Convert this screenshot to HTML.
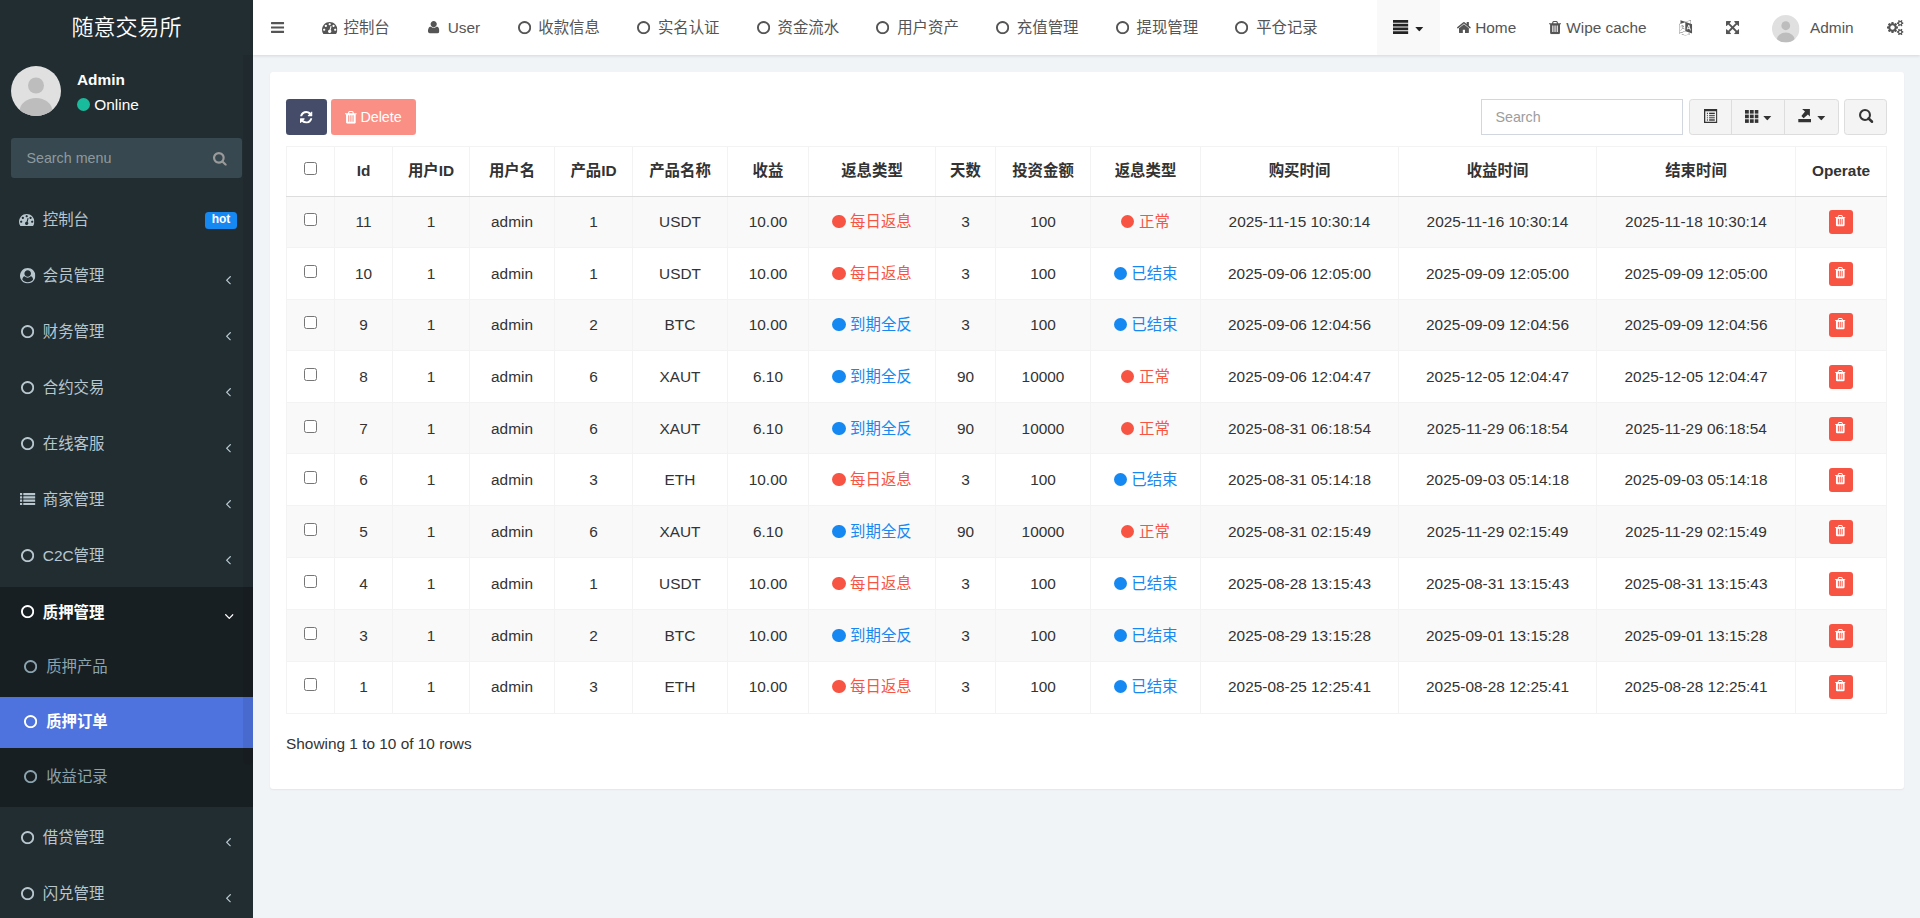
<!DOCTYPE html>
<html lang="zh-CN"><head><meta charset="utf-8"><title>随意交易所</title>
<style>
*{box-sizing:border-box}
html,body{margin:0;padding:0}
body{width:1920px;height:918px;overflow:hidden;position:relative;background:#f1f4f6;font-family:"Liberation Sans","Noto Sans CJK SC",sans-serif;font-size:15.4px;color:#333;line-height:1.42857}
svg{fill:currentColor;overflow:visible}
.ic{position:absolute;display:block}
.abs{position:absolute;white-space:nowrap}
#side{position:absolute;left:0;top:0;width:253px;height:918px;background:#222d32;overflow:hidden}
#logo{position:absolute;left:0;top:0;width:253px;height:55px;line-height:55px;text-align:center;color:#fff;font-size:22px;font-weight:350}
#sbar{position:absolute;left:243px;top:55px;width:10px;height:710px;background:rgba(0,0,0,.075);border-radius:0 0 5px 5px;z-index:5}
.mi{position:absolute;left:0;width:253px;height:48px;line-height:48px;color:#b8c7ce;font-size:15.4px;white-space:nowrap}
.mi .t{position:absolute;left:42.8px;top:1.4px}
.mi.sub{height:51px;line-height:51px;color:#8aa4af}
.mi.sub .t{left:46.2px;top:0.4px}
.mi.on{color:#fff;font-weight:bold}
#nav{position:absolute;left:253px;top:0;width:1667px;height:55px;background:#fff;box-shadow:0 1px 3px rgba(0,20,40,.13)}
#tabs{position:absolute;left:49.9px;top:0;height:55px;white-space:nowrap;font-size:0}
#tabs a{display:inline-block;height:55px;line-height:55px;padding:0 16.5px;margin-right:0.98px;font-size:15.4px;color:#555;vertical-align:top}
#tabs a i{display:inline-block;width:19.8px;text-align:center;vertical-align:top;height:55px;position:relative}

#tabs a span{margin-left:4.3px}
.nt{position:absolute;top:0;height:55px;line-height:55px;color:#555;font-size:15.4px;white-space:nowrap}
#panel{position:absolute;left:270px;top:72px;width:1634px;height:717px;background:#fff;border-radius:3.3px;box-shadow:0 1px 2px rgba(0,0,0,.06)}
.btn{position:absolute;border-radius:3.3px;font-size:14.3px;white-space:nowrap}
table{position:absolute;left:286px;top:146px;width:1600px;border-collapse:collapse;table-layout:fixed;font-size:15.4px}
th,td{border:1px solid #f3f3f3;text-align:center;vertical-align:middle;padding:0;white-space:nowrap;overflow:hidden}
th{height:50px;padding-bottom:2px;font-weight:bold;border-bottom:1px solid #ddd;color:#333}
td{height:auto;vertical-align:top;padding-top:13.6px;line-height:22px}
tbody tr:nth-child(odd){background:#f9f9f9}
tr.s1 td{padding-top:14.6px}
.cb{display:inline-block;width:13px;height:13px;border:1px solid #767676;border-radius:2.5px;background:#fff;vertical-align:middle;position:relative;top:-3.5px}
.red{color:#f75444}.blue{color:#1688f1}
.dot{display:inline-block;width:13.2px;height:13.2px;border-radius:50%;background:currentColor;vertical-align:middle;margin-right:4.6px;position:relative;top:-1px}
.del{display:inline-block;width:24px;height:24px;border-radius:3px;background:#f75444;vertical-align:middle;position:relative;top:-1px;color:#fff}

</style></head><body>

<svg width="0" height="0" style="position:absolute">
<defs>
<symbol id="i-dash" viewBox="0 0 16 12"><path fill-rule="evenodd" d="M0 8A8 8 0 0 1 16 8Q16 10.4 14.7 12L1.3 12Q0 10.4 0 8Z M1.95 8a1.05 1.05 0 1 0 2.1 0a1.05 1.05 0 1 0 -2.1 0Z M3.45 4.4a1.05 1.05 0 1 0 2.1 0a1.05 1.05 0 1 0 -2.1 0Z M6.95 2.9a1.05 1.05 0 1 0 2.1 0a1.05 1.05 0 1 0 -2.1 0Z M10.45 4.4a1.05 1.05 0 1 0 2.1 0a1.05 1.05 0 1 0 -2.1 0Z M11.95 8a1.05 1.05 0 1 0 2.1 0a1.05 1.05 0 1 0 -2.1 0Z M6.45 9.6a1.55 1.55 0 1 0 3.1 0a1.55 1.55 0 1 0 -3.1 0Z M7.6 8.6L8.7 4.3L9.5 4.5L8.6 8.9Z"/></symbol>
<symbol id="i-user" viewBox="0 0 11 12.4"><circle cx="5.5" cy="3.1" r="3.1"/><path d="M0 10.6Q0 6.2 2.6 6.1Q5.5 8.2 8.4 6.1Q11 6.2 11 10.6Q11 12.4 9.2 12.4H1.8Q0 12.4 0 10.6Z"/></symbol>
<symbol id="i-circle-o" viewBox="0 0 13.2 13.2"><circle cx="6.6" cy="6.6" r="5.5" fill="none" stroke="currentColor" stroke-width="2.2"/></symbol>
<symbol id="i-circle" viewBox="0 0 13.2 13.2"><circle cx="6.6" cy="6.6" r="6.6"/></symbol>
<symbol id="i-justify" viewBox="0 0 15.4 14"><rect x="0" y="0" width="15.4" height="2.75"/><rect x="0" y="3.75" width="15.4" height="2.75"/><rect x="0" y="7.5" width="15.4" height="2.75"/><rect x="0" y="11.25" width="15.4" height="2.75"/></symbol>
<symbol id="i-caret" viewBox="0 0 8 4.4"><path d="M0 0H8L4 4.4Z"/></symbol>
<symbol id="i-home" viewBox="0 0 14 11.6"><path d="M7 0L9.9 2.45V0.9H11.8V4.05L14 5.9L13.1 7L7 1.9L0.9 7L0 5.9Z"/><path d="M2 7.1L7 2.9L12 7.1V11.6H8.3V8.1H5.7V11.6H2Z"/></symbol>
<symbol id="i-trash" viewBox="0 0 11 12.6"><path fill-rule="evenodd" d="M0 1.7H3.2L3.9 0.2Q4.1 0 4.4 0H6.6Q6.9 0 7.1 0.2L7.8 1.7H11V2.9H10.1V11.2Q10.1 12.6 8.8 12.6H2.2Q0.9 12.6 0.9 11.2V2.9H0Z M2.9 4.6V10.6H3.8V4.6Z M5.05 4.6V10.6H5.95V4.6Z M7.2 4.6V10.6H8.1V4.6Z M4.3 1.7H6.7L6.4 1H4.6Z"/></symbol>
<symbol id="i-lang" viewBox="0 0 14 15"><path d="M2 0.3L5.2 2.2L2 2.5Z"/><path fill-rule="evenodd" d="M6.9 2.6L13.6 4.4V13.6L6.9 11.8Z M10.2 5.6L8.6 10.6H9.5L9.8 9.6H10.9L11.2 10.9H12.1L10.9 5.8Z"/><path d="M0.4 4.2L6.4 2.8V11.8L0.4 13.2Z" fill="none" stroke="currentColor" stroke-width="0.5" opacity="0.35"/><path d="M3.2 14L7 14.6L10 13.4" fill="none" stroke="currentColor" stroke-width="0.5" opacity="0.3"/></symbol>
<symbol id="i-expand" viewBox="0 0 13.5 13"><path d="M0 0H4.6L3.1 1.5L6.75 5.1L10.4 1.5L8.9 0H13.5V4.6L12 3.1L8.3 6.5L12 9.9L13.5 8.4V13H8.9L10.4 11.5L6.75 7.9L3.1 11.5L4.6 13H0V8.4L1.5 9.9L5.2 6.5L1.5 3.1L0 4.6Z"/></symbol>
<symbol id="i-cogs" viewBox="0 0 16.2 15"><g fill="none" stroke="currentColor"><circle cx="5.3" cy="8" r="3.1" stroke-width="2.3"/><circle cx="5.3" cy="8" r="4.7" stroke-width="1.5" stroke-dasharray="2.05 1.64"/><circle cx="13.3" cy="3.4" r="1.55" stroke-width="1.3"/><circle cx="13.3" cy="3.4" r="2.5" stroke-width="0.9" stroke-dasharray="1.1 0.86"/><circle cx="13.3" cy="11.8" r="1.55" stroke-width="1.3"/><circle cx="13.3" cy="11.8" r="2.5" stroke-width="0.9" stroke-dasharray="1.1 0.86"/></g></symbol>
<symbol id="i-usercircle" viewBox="0 0 16 16"><clipPath id="ucclip"><circle cx="8" cy="8" r="6.6"/></clipPath><circle cx="8" cy="8" r="7.2" fill="none" stroke="currentColor" stroke-width="1.5"/><circle cx="8" cy="6.1" r="2.9"/><ellipse cx="8" cy="14.6" rx="5.6" ry="5" clip-path="url(#ucclip)"/></symbol>
<symbol id="i-list" viewBox="0 0 15.4 12.4"><rect x="0" y="0" width="2.2" height="2.2"/><rect x="3.3" y="0" width="12.1" height="2.2"/><rect x="0" y="3.4" width="2.2" height="2.2"/><rect x="3.3" y="3.4" width="12.1" height="2.2"/><rect x="0" y="6.8" width="2.2" height="2.2"/><rect x="3.3" y="6.8" width="12.1" height="2.2"/><rect x="0" y="10.2" width="2.2" height="2.2"/><rect x="3.3" y="10.2" width="12.1" height="2.2"/></symbol>
<symbol id="i-angle-left" viewBox="0 0 7 10"><path d="M5.9 0.8L1.6 5L5.9 9.2" fill="none" stroke="currentColor" stroke-width="1.7"/></symbol>
<symbol id="i-angle-down" viewBox="0 0 10 7"><path d="M0.8 1.1L5 5.4L9.2 1.1" fill="none" stroke="currentColor" stroke-width="1.8"/></symbol>
<symbol id="i-search" viewBox="0 0 14.4 14"><circle cx="6" cy="6" r="4.95" fill="none" stroke="currentColor" stroke-width="2.1"/><path d="M9.6 9.5L13.1 12.7" stroke="currentColor" stroke-width="2.6" stroke-linecap="round"/></symbol>
<symbol id="i-refresh" viewBox="0 0 13.2 13.2"><path d="M1.3 5.6A5.4 5.4 0 0 1 10.6 3" fill="none" stroke="currentColor" stroke-width="2.2"/><path d="M12.7 0.6V5.6H7.7Z"/><path d="M11.9 7.6A5.4 5.4 0 0 1 2.6 10.2" fill="none" stroke="currentColor" stroke-width="2.2"/><path d="M0.5 12.6V7.6H5.5Z"/></symbol>
<symbol id="i-listalt" viewBox="0 0 13.4 14"><path fill-rule="evenodd" d="M0 0H13.4V14H0Z M1.3 2.2V12.7H12.1V2.2Z"/><rect x="2.9" y="3.7" width="1" height="1.4"/><rect x="5.1" y="3.7" width="5.7" height="1.4"/><rect x="2.9" y="6.2" width="1" height="1"/><rect x="5.1" y="6.2" width="5.7" height="1"/><rect x="2.9" y="8.3" width="1" height="1"/><rect x="5.1" y="8.3" width="5.7" height="1"/><rect x="2.9" y="10.3" width="1" height="1.4"/><rect x="5.1" y="10.3" width="5.7" height="1.4"/></symbol>
<symbol id="i-th" viewBox="0 0 13.2 12.8" preserveAspectRatio="none"><rect x="0" y="0" width="3.7" height="3.6"/><rect x="4.75" y="0" width="3.7" height="3.6"/><rect x="9.5" y="0" width="3.7" height="3.6"/><rect x="0" y="4.6" width="3.7" height="3.6"/><rect x="4.75" y="4.6" width="3.7" height="3.6"/><rect x="9.5" y="4.6" width="3.7" height="3.6"/><rect x="0" y="9.2" width="3.7" height="3.6"/><rect x="4.75" y="9.2" width="3.7" height="3.6"/><rect x="9.5" y="9.2" width="3.7" height="3.6"/></symbol>
<symbol id="i-export" viewBox="0 0 13.3 13.6"><path d="M0.3 9.9H13V13.6H0.3Z"/><path d="M4.1 0H11.9V7.6L9.9 5.6L5.6 9.2L3.4 6.9L7 2.6Z"/></symbol>
<symbol id="i-avatar" viewBox="0 0 50 50"><clipPath id="avclip"><circle cx="25" cy="25" r="25"/></clipPath><circle cx="25" cy="25" r="25" fill="#e0e0e0"/><circle cx="25" cy="19.5" r="8" fill="#bdbdbd"/><ellipse cx="25" cy="45" rx="16.3" ry="13" fill="#bdbdbd" clip-path="url(#avclip)"/></symbol>
<symbol id="fa-search" viewBox="64 128 1664 1664"><path d="M1216 832q0-185-131.500-316.500t-316.500-131.500-316.500 131.500-131.500 316.500 131.500 316.500 316.500 131.500 316.500-131.500 131.500-316.500zM1728 1664q0 52-38 90t-90 38q-54 0-90-38l-343-342q-179 124-399 124-143 0-273.500-55.500t-225-150-150-225-55.500-273.500 55.500-273.500 150-225 225-150 273.500-55.500 273.500 55.500 225 150 150 225 55.500 273.500q0 220-124 399l343 343q37 37 37 90z"/></symbol>
<symbol id="fa-dash" viewBox="0 256 1792 1408"><path d="M384 1152q0-53-37.500-90.500t-90.500-37.500-90.500 37.500-37.500 90.500 37.500 90.500 90.500 37.500 90.500-37.500 37.500-90.500zM576 704q0-53-37.500-90.500t-90.500-37.500-90.500 37.500-37.500 90.500 37.500 90.500 90.500 37.500 90.500-37.500 37.500-90.500zM1004 1185l101-382q6-26-7.500-48.500t-38.500-29.500-48 6.500-30 39.500l-101 382q-60 5-107 43.500t-63 98.500q-20 77 20 146t117 89 146-20 89-117q16-60-6-117t-72-91zM1664 1152q0-53-37.500-90.500t-90.500-37.500-90.500 37.500-37.500 90.500 37.500 90.500 90.500 37.500 90.500-37.500 37.500-90.500zM1024 512q0-53-37.500-90.500t-90.500-37.500-90.500 37.500-37.500 90.500 37.500 90.500 90.500 37.500 90.500-37.500 37.500-90.500zM1472 704q0-53-37.500-90.500t-90.500-37.500-90.500 37.500-37.500 90.500 37.500 90.500 90.500 37.500 90.500-37.500 37.500-90.500zM1792 1152q0 261-141 483-19 29-54 29h-1402q-35 0-54-29-141-221-141-483 0-182 71-348t191-286 286-191 348-71 348 71 286 191 191 286 71 348z"/></symbol>
<symbol id="fa-usercircle" viewBox="0 -2 1792 1794"><path d="M1523 1339q-22-155-87.500-257.500t-184.500-118.500q-67 74-159.500 115.500t-195.500 41.500-195.500-41.500-159.500-115.500q-119 16-184.500 118.500t-87.500 257.500q106 150 271 237.500t356 87.500 356-87.500 271-237.500zM1280 640q0-159-112.500-271.500t-271.500-112.500-271.500 112.500-112.500 271.500 112.500 271.500 271.500 112.500 271.500-112.500 112.500-271.500zM1792 896q0 182-71 347.500t-190.500 286-285.500 191.500-349 71q-182 0-348-71t-286-191-191-286-71-349 71-349 191-286 286-191 348-71 348 71 286 191 191 286 71 349z"/></symbol>
<symbol id="fa-angle-left" viewBox="621 461 582 998"><path d="M1203 544q0 13-10 23l-393 393 393 393q10 10 10 23t-10 23l-50 50q-10 10-23 10t-23-10l-466-466q-10-10-10-23t10-23l466-466q10-10 23-10t23 10l50 50q10 10 10 23z"/></symbol>
<symbol id="fa-circle-o" viewBox="128 128 1536 1536"><path d="M896 352q-148 0-273 73t-198 198-73 273 73 273 198 198 273 73 273-73 198-198 73-273-73-273-198-198-273-73zM1664 896q0 209-103 385.500t-279.500 279.500-385.500 103-385.500-103-279.500-279.500-103-385.500 103-385.500 279.500-279.500 385.500-103 385.500 103 279.500 279.500 103 385.500z"/></symbol>
<symbol id="fa-list" viewBox="0 128 1792 1408"><path d="M256 1312v192q0 13-9.500 22.500t-22.500 9.500h-192q-13 0-22.500-9.500t-9.500-22.500v-192q0-13 9.500-22.500t22.500-9.500h192q13 0 22.500 9.500t9.500 22.500zM256 928v192q0 13-9.500 22.500t-22.500 9.500h-192q-13 0-22.500-9.500t-9.500-22.500v-192q0-13 9.500-22.500t22.500-9.500h192q13 0 22.500 9.500t9.500 22.500zM256 544v192q0 13-9.500 22.500t-22.500 9.500h-192q-13 0-22.500-9.500t-9.500-22.500v-192q0-13 9.500-22.500t22.500-9.500h192q13 0 22.500 9.500t9.500 22.500zM1792 1312v192q0 13-9.500 22.500t-22.500 9.500h-1344q-13 0-22.500-9.500t-9.500-22.500v-192q0-13 9.500-22.500t22.500-9.500h1344q13 0 22.500 9.500t9.500 22.500zM256 160v192q0 13-9.500 22.500t-22.500 9.500h-192q-13 0-22.500-9.500t-9.500-22.500v-192q0-13 9.500-22.500t22.500-9.500h192q13 0 22.500 9.500t9.500 22.500zM1792 928v192q0 13-9.500 22.500t-22.500 9.500h-1344q-13 0-22.500-9.500t-9.500-22.500v-192q0-13 9.500-22.500t22.500-9.500h1344q13 0 22.500 9.500t9.500 22.500zM1792 544v192q0 13-9.500 22.500t-22.500 9.500h-1344q-13 0-22.500-9.500t-9.500-22.500v-192q0-13 9.500-22.500t22.500-9.500h1344q13 0 22.500 9.500t9.500 22.500zM1792 160v192q0 13-9.500 22.500t-22.500 9.500h-1344q-13 0-22.500-9.500t-9.500-22.500v-192q0-13 9.500-22.500t22.500-9.500h1344q13 0 22.500 9.500t9.500 22.500z"/></symbol>
<symbol id="fa-angle-down" viewBox="397 653 998 582"><path d="M1395 736q0 13-10 23l-466 466q-10 10-23 10t-23-10l-466-466q-10-10-10-23t10-23l50-50q10-10 23-10t23 10l393 393 393-393q10-10 23-10t23 10l50 50q10 10 10 23z"/></symbol>
<symbol id="fa-bars" viewBox="128 256 1536 1280"><path d="M1664 1344v128q0 26-19 45t-45 19h-1408q-26 0-45-19t-19-45v-128q0-26 19-45t45-19h1408q26 0 45 19t19 45zM1664 832v128q0 26-19 45t-45 19h-1408q-26 0-45-19t-19-45v-128q0-26 19-45t45-19h1408q26 0 45 19t19 45zM1664 320v128q0 26-19 45t-45 19h-1408q-26 0-45-19t-19-45v-128q0-26 19-45t45-19h1408q26 0 45 19t19 45z"/></symbol>
<symbol id="fa-user" viewBox="192 128 1408 1536"><path d="M1600 1405q0 120-73 189.500t-194 69.500h-874q-121 0-194-69.500t-73-189.500q0-53 3.500-103.500t14-109 26.500-108.500 43-97.500 62-81 85.500-53.500 111.500-20q9 0 42 21.500t74.500 48 108 48 133.500 21.500 133.500-21.500 108-48 74.500-48 42-21.500q61 0 111.500 20t85.500 53.500 62 81 43 97.500 26.500 108.500 14 109 3.500 103.500zM1280 512q0 159-112.500 271.500t-271.500 112.500-271.500-112.500-112.500-271.500 112.500-271.500 271.500-112.500 271.500 112.500 112.500 271.500z"/></symbol>
<symbol id="fa-home" viewBox="89.8889 253 1612.22 1283"><path d="M1472 992v480q0 26-19 45t-45 19h-384v-384h-256v384h-384q-26 0-45-19t-19-45v-480q0-1 .5-3t.5-3l575-474 575 474q1 2 1 6zM1695 923l-62 74q-8 9-21 11h-3q-13 0-21-7l-692-577-692 577q-12 8-24 7-13-2-21-11l-62-74q-8-10-7-23.500t11-21.500l719-599q32-26 76-26t76 26l244 204v-195q0-14 9-23t23-9h192q14 0 23 9t9 23v408l219 182q10 8 11 21.500t-7 23.500z"/></symbol>
<symbol id="fa-trash" viewBox="192 128 1408 1536"><path d="M704 1376v-704q0-14-9-23t-23-9h-64q-14 0-23 9t-9 23v704q0 14 9 23t23 9h64q14 0 23-9t9-23zM960 1376v-704q0-14-9-23t-23-9h-64q-14 0-23 9t-9 23v704q0 14 9 23t23 9h64q14 0 23-9t9-23zM1216 1376v-704q0-14-9-23t-23-9h-64q-14 0-23 9t-9 23v704q0 14 9 23t23 9h64q14 0 23-9t9-23zM672 384h448l-48-117q-7-9-17-11h-317q-10 2-17 11zM1600 416v64q0 14-9 23t-23 9h-96v948q0 83-47 143.500t-113 60.500h-832q-66 0-113-58.500t-47-141.500v-952h-96q-14 0-23-9t-9-23v-64q0-14 9-23t23-9h309l70-167q15-37 54-63t79-26h320q40 0 79 26t54 63l70 167h309q14 0 23 9t9 23z"/></symbol>
<symbol id="fa-language" viewBox="128 0 1536 1792"><path d="M782 1078q-1 3-12.500-.500t-31.500-11.500l-20-9q-44-20-87-49-7-5-41-31.500t-38-28.500q-67 103-134 181-81 95-105 110-4 2-19.500 4t-18.500 0q6-4 82-92 21-24 85.500-115t78.500-118q17-30 51-98.500t36-77.500q-8-1-110 33-8 2-27.500 7.500t-34.500 9.500-17 5q-2 2-2 10.500t-1 9.500q-5 10-31 15-23 7-47 0-18-4-28-21-4-6-5-23 6-2 24.500-5t29.500-6q58-16 105-32 100-35 102-35 10-2 43-19.500t44-21.500q9-3 21.500-8t14.500-5.500 6 .5q2 12-1 33 0 2-12.500 27t-26.500 53.500-17 33.500q-25 50-77 131l64 28q12 6 74.500 32t67.500 28q4 1 10.500 25.500t4.500 30.500zM577 592q3 15-4 28-12 23-50 38-30 12-60 12-26-3-49-26-14-15-18-41l1-3q3 3 19.500 5t26.500 0 58-16q36-12 55-14 17 0 21 17zM1275 721l63 227-139-42zM167 1521l694-232v-1032l-694 233v1031zM1408 1204l102 31-181-657-100-31-216 536 102 31 45-110 211 65zM905 242l573 184v-380zM1216 1565l158 13-54 160-40-66q-130 83-276 108-58 12-91 12h-84q-79 0-199.500-39t-183.500-85q-8-7-8-16 0-8 5-13.500t13-5.500q4 0 18 7.500t30.500 16.500 20.500 11q73 37 159.500 61.500t157.500 24.500q95 0 167-14.500t157-50.500q15-7 30.500-15.500t34-19 28.500-16.500zM1664 486v1079l-774-246q-14 6-375 127.500t-368 121.500q-13 0-18-13 0-1-1-3v-1078q3-9 4-10 5-6 20-11 106-35 149-50v-384l558 198q2 0 160.500-55t316-108.500 161.500-53.500q20 0 20 21v418z"/></symbol>
<symbol id="fa-expand" viewBox="0 0 1536 1536"><path d="M1283 413l-355 355 355 355 144-144q29-31 70-14 39 17 39 59v448q0 26-19 45t-45 19h-448q-42 0-59-40-17-39 14-69l144-144-355-355-355 355 144 144q31 30 14 69-17 40-59 40h-448q-26 0-45-19t-19-45v-448q0-42 40-59 39-17 69 14l144 144 355-355-355-355-144 144q-19 19-45 19-12 0-24-5-40-17-40-59v-448q0-26 19-45t45-19h448q42 0 59 40 17 39-14 69l-144 144 355 355 355-355-144-144q-31-30-14-69 17-40 59-40h448q26 0 45 19t19 45v448q0 42-39 59-13 5-25 5-26 0-45-19z"/></symbol>
<symbol id="fa-cogs" viewBox="0 16 1920 1761"><path d="M896 896q0-106-75-181t-181-75-181 75-75 181 75 181 181 75 181-75 75-181zM1664 1408q0-52-38-90t-90-38-90 38-38 90q0 53 37.500 90.500t90.500 37.500 90.500-37.500 37.500-90.500zM1664 384q0-52-38-90t-90-38-90 38-38 90q0 53 37.500 90.500t90.500 37.500 90.500-37.500 37.500-90.500zM1280 805v185q0 10-7 19.500t-16 10.500l-155 24q-11 35-32 76 34 48 90 115 7 11 7 20 0 12-7 19-23 30-82.500 89.500t-78.500 59.500q-11 0-21-7l-115-90q-37 19-77 31-11 108-23 155-7 24-30 24h-186q-11 0-20-7.500t-10-17.500l-23-153q-34-10-75-31l-118 89q-7 7-20 7-11 0-21-8-144-133-144-160 0-9 7-19 10-14 41-53t47-61q-23-44-35-82l-152-24q-10-1-17-9.500t-7-19.500v-185q0-10 7-19.500t16-10.500l155-24q11-35 32-76-34-48-90-115-7-11-7-20 0-12 7-20 22-30 82-89t79-59q11 0 21 7l115 90q34-18 77-32 11-108 23-154 7-24 30-24h186q11 0 20 7.500t10 17.500l23 153q34 10 75 31l118-89q8-7 20-7 11 0 21 8 144 133 144 160 0 8-7 19-12 16-42 54t-45 60q23 48 34 82l152 23q10 2 17 10.500t7 19.500zM1920 1338v140q0 16-149 31-12 27-30 52 51 113 51 138 0 4-4 7-122 71-124 71-8 0-46-47t-52-68q-20 2-30 2t-30-2q-14 21-52 68t-46 47q-2 0-124-71-4-3-4-7 0-25 51-138-18-25-30-52-149-15-149-31v-140q0-16 149-31 13-29 30-52-51-113-51-138 0-4 4-7 4-2 35-20t59-34 30-16q8 0 46 46.500t52 67.500q20-2 30-2t30 2q51-71 92-112l6-2q4 0 124 70 4 3 4 7 0 25-51 138 17 23 30 52 149 15 149 31zM1920 314v140q0 16-149 31-12 27-30 52 51 113 51 138 0 4-4 7-122 71-124 71-8 0-46-47t-52-68q-20 2-30 2t-30-2q-14 21-52 68t-46 47q-2 0-124-71-4-3-4-7 0-25 51-138-18-25-30-52-149-15-149-31v-140q0-16 149-31 13-29 30-52-51-113-51-138 0-4 4-7 4-2 35-20t59-34 30-16q8 0 46 46.500t52 67.500q20-2 30-2t30 2q51-71 92-112l6-2q4 0 124 70 4 3 4 7 0 25-51 138 17 23 30 52 149 15 149 31z"/></symbol>
<symbol id="fa-refresh" viewBox="128 128 1536 1536"><path d="M1639 1056q0 5-1 7-64 268-268 434.500t-478 166.500q-146 0-282.500-55t-243.500-157l-129 129q-19 19-45 19t-45-19-19-45v-448q0-26 19-45t45-19h448q26 0 45 19t19 45-19 45l-137 137q71 66 161 102t187 36q134 0 250-65t186-179q11-17 53-117 8-23 30-23h192q13 0 22.500 9.500t9.500 22.500zM1664 256v448q0 26-19 45t-45 19h-448q-26 0-45-19t-19-45 19-45l138-138q-148-137-349-137-134 0-250 65t-186 179q-11 17-53 117-8 23-30 23h-199q-13 0-22.500-9.500t-9.500-22.500v-7q65-268 270-434.500t480-166.500q146 0 284 55.500t245 156.500l130-129q19-19 45-19t45 19 19 45z"/></symbol>
<symbol id="i-bars3" viewBox="0 0 12.9 10.9"><rect x="0" y="0" width="12.9" height="2.1"/><rect x="0" y="4.5" width="12.9" height="2.1"/><rect x="0" y="8.8" width="12.9" height="2.1"/></symbol>
</defs>
</svg>

<div id="side">
<div id="logo">随意交易所</div>
<svg class="ic" style="left:11px;top:66px;width:50px;height:50px;"><use href="#i-avatar"/></svg>
<div class="abs" style="left:77px;top:68.5px;color:#fff;font-weight:bold;font-size:15.4px;line-height:22px">Admin</div>
<div class="abs" style="left:77px;top:98px;width:13.2px;height:13.2px;border-radius:50%;background:#18bc9c"></div>
<div class="abs" style="left:94.3px;top:93.5px;color:#fff;font-size:15.4px;line-height:22px">Online</div>
<div class="abs" style="left:11px;top:138px;width:231px;height:40px;background:#374850;border-radius:3.3px"></div>
<div class="abs" style="left:26.4px;top:138px;height:40px;line-height:40px;color:#8e9a9f;font-size:14.3px">Search menu</div>
<svg class="ic" style="left:213.18px;top:151.58px;width:13.84px;height:13.84px;color:#9a9a9a;"><use href="#fa-search"/></svg>
<div class="mi " style="top:195.0px"><svg class="ic" style="left:19.40px;top:19.05px;width:15.40px;height:12.10px;"><use href="#fa-dash"/></svg><span class="t">控制台</span><span class="abs" style="left:205px;top:17px;width:32px;height:17px;line-height:15.5px;border-radius:3.5px;background:#1688f1;color:#fff;font-weight:bold;font-size:12px;text-align:center">hot</span></div>
<div class="mi " style="top:251.0px"><svg class="ic" style="left:19.60px;top:16.84px;width:15.40px;height:15.42px;"><use href="#fa-usercircle"/></svg><span class="t">会员管理</span><svg class="ic" style="left:225.90px;top:24.81px;width:5.00px;height:8.58px;"><use href="#fa-angle-left"/></svg></div>
<div class="mi " style="top:307.0px"><svg class="ic" style="left:20.85px;top:17.95px;width:13.20px;height:13.20px;"><use href="#fa-circle-o"/></svg><span class="t">财务管理</span><svg class="ic" style="left:225.90px;top:24.81px;width:5.00px;height:8.58px;"><use href="#fa-angle-left"/></svg></div>
<div class="mi " style="top:363.0px"><svg class="ic" style="left:20.85px;top:17.95px;width:13.20px;height:13.20px;"><use href="#fa-circle-o"/></svg><span class="t">合约交易</span><svg class="ic" style="left:225.90px;top:24.81px;width:5.00px;height:8.58px;"><use href="#fa-angle-left"/></svg></div>
<div class="mi " style="top:419.0px"><svg class="ic" style="left:20.85px;top:17.95px;width:13.20px;height:13.20px;"><use href="#fa-circle-o"/></svg><span class="t">在线客服</span><svg class="ic" style="left:225.90px;top:24.81px;width:5.00px;height:8.58px;"><use href="#fa-angle-left"/></svg></div>
<div class="mi " style="top:475.0px"><svg class="ic" style="left:19.75px;top:18.25px;width:15.40px;height:12.10px;"><use href="#fa-list"/></svg><span class="t">商家管理</span><svg class="ic" style="left:225.90px;top:24.81px;width:5.00px;height:8.58px;"><use href="#fa-angle-left"/></svg></div>
<div class="mi " style="top:531.0px"><svg class="ic" style="left:20.85px;top:17.95px;width:13.20px;height:13.20px;"><use href="#fa-circle-o"/></svg><span class="t">C2C管理</span><svg class="ic" style="left:225.90px;top:24.81px;width:5.00px;height:8.58px;"><use href="#fa-angle-left"/></svg></div>
<div class="abs" style="left:0;top:587px;width:253px;height:220px;background:#181f23"></div>
<div class="mi on" style="top:587.5px"><svg class="ic" style="left:20.85px;top:17.50px;width:13.20px;height:13.20px;"><use href="#fa-circle-o"/></svg><span class="t">质押管理</span><svg class="ic" style="left:225.21px;top:26.70px;width:8.58px;height:5.00px;"><use href="#fa-angle-down"/></svg></div>
<div class="mi sub" style="top:640.4px"><svg class="ic" style="left:24.15px;top:19.40px;width:13.20px;height:13.20px;"><use href="#fa-circle-o"/></svg><span class="t">质押产品</span></div>
<div class="abs" style="left:0;top:697px;width:253px;height:51px;background:#4e73df"></div>
<div class="mi sub on" style="top:696.0px"><svg class="ic" style="left:24.15px;top:19.00px;width:13.20px;height:13.20px;"><use href="#fa-circle-o"/></svg><span class="t">质押订单</span></div>
<div class="mi sub" style="top:750.8px"><svg class="ic" style="left:24.15px;top:19.00px;width:13.20px;height:13.20px;"><use href="#fa-circle-o"/></svg><span class="t">收益记录</span></div>
<div class="mi " style="top:813.0px"><svg class="ic" style="left:20.85px;top:17.95px;width:13.20px;height:13.20px;"><use href="#fa-circle-o"/></svg><span class="t">借贷管理</span><svg class="ic" style="left:225.90px;top:24.81px;width:5.00px;height:8.58px;"><use href="#fa-angle-left"/></svg></div>
<div class="mi " style="top:869.0px"><svg class="ic" style="left:20.85px;top:17.95px;width:13.20px;height:13.20px;"><use href="#fa-circle-o"/></svg><span class="t">闪兑管理</span><svg class="ic" style="left:225.90px;top:24.81px;width:5.00px;height:8.58px;"><use href="#fa-angle-left"/></svg></div>
<div id="sbar"></div>
</div>
<div id="nav">
<svg class="ic" style="left:18.15px;top:22.00px;width:13.20px;height:11.00px;color:#555;"><use href="#fa-bars"/></svg>
<div id="tabs">
<a><i><svg class="ic" style="left:2.20px;top:22.00px;width:15.40px;height:12.10px;"><use href="#fa-dash"/></svg></i><span>控制台</span></a>
<a><i><svg class="ic" style="left:4.20px;top:21.19px;width:11.39px;height:12.43px;"><use href="#fa-user"/></svg></i><span>User</span></a>
<a><i><svg class="ic" style="left:3.30px;top:20.80px;width:13.20px;height:13.20px;"><use href="#fa-circle-o"/></svg></i><span>收款信息</span></a>
<a><i><svg class="ic" style="left:3.30px;top:20.80px;width:13.20px;height:13.20px;"><use href="#fa-circle-o"/></svg></i><span>实名认证</span></a>
<a><i><svg class="ic" style="left:3.30px;top:20.80px;width:13.20px;height:13.20px;"><use href="#fa-circle-o"/></svg></i><span>资金流水</span></a>
<a><i><svg class="ic" style="left:3.30px;top:20.80px;width:13.20px;height:13.20px;"><use href="#fa-circle-o"/></svg></i><span>用户资产</span></a>
<a><i><svg class="ic" style="left:3.30px;top:20.80px;width:13.20px;height:13.20px;"><use href="#fa-circle-o"/></svg></i><span>充值管理</span></a>
<a><i><svg class="ic" style="left:3.30px;top:20.80px;width:13.20px;height:13.20px;"><use href="#fa-circle-o"/></svg></i><span>提现管理</span></a>
<a><i><svg class="ic" style="left:3.30px;top:20.80px;width:13.20px;height:13.20px;"><use href="#fa-circle-o"/></svg></i><span>平仓记录</span></a>
</div>
<div class="abs" style="left:1124px;top:0;width:63px;height:55px;background:#f9f9f9"></div>
<svg class="ic" style="left:1139.7px;top:19.9px;width:15.4px;height:14px;color:#222;"><use href="#i-justify"/></svg>
<svg class="ic" style="left:1161.9px;top:26.7px;width:8.6px;height:4.4px;color:#222;"><use href="#i-caret"/></svg>
<svg class="ic" style="left:1203.97px;top:21.64px;width:13.86px;height:11.03px;color:#555;"><use href="#fa-home"/></svg>
<div class="nt" style="left:1222.2px">Home</div>
<svg class="ic" style="left:1296.25px;top:20.60px;width:12.10px;height:13.20px;color:#555;"><use href="#fa-trash"/></svg>
<div class="nt" style="left:1313.2px">Wipe cache</div>
<svg class="ic" style="left:1426.15px;top:19.80px;width:13.20px;height:15.40px;color:#555;"><use href="#fa-language"/></svg>
<svg class="ic" style="left:1472.80px;top:20.90px;width:13.20px;height:13.20px;color:#555;"><use href="#fa-expand"/></svg>
<svg class="ic" style="left:1519px;top:14.8px;width:27.5px;height:27.5px;"><use href="#i-avatar"/></svg>
<div class="nt" style="left:1557px">Admin</div>
<svg class="ic" style="left:1633.65px;top:19.93px;width:16.50px;height:15.13px;color:#555;"><use href="#fa-cogs"/></svg>
</div>
<div id="panel"></div>
<div class="btn" style="left:286px;top:99px;width:41px;height:36px;background:#444c69;color:#fff"><svg class="ic" style="left:14.14px;top:11.54px;width:12.51px;height:12.51px;"><use href="#fa-refresh"/></svg></div>
<div class="btn" style="left:331px;top:99px;width:85px;height:36px;background:#fa9085;color:#fff;line-height:36px"><svg class="ic" style="left:13.61px;top:11.57px;width:11.79px;height:12.86px;"><use href="#fa-trash"/></svg><span class="abs" style="left:29.4px;top:0">Delete</span></div>
<div class="abs" style="left:1481px;top:99px;width:202px;height:36px;border:1px solid #d2d6de;background:#fff;line-height:34px;padding-left:13.4px;color:#9d9d9d;font-size:14.3px">Search</div>
<div class="abs" style="left:1689px;top:99px;width:150px;height:36px;border:1px solid #ddd;background:#f4f4f4;border-radius:3.3px"></div>
<div class="abs" style="left:1731px;top:100px;width:1px;height:34px;background:#ddd"></div>
<div class="abs" style="left:1784px;top:100px;width:1px;height:34px;background:#ddd"></div>
<svg class="ic" style="left:1704.25px;top:108.95px;width:13.4px;height:14px;color:#333;"><use href="#i-listalt"/></svg>
<svg class="ic" style="left:1744.5px;top:110px;width:13.6px;height:12.9px;color:#333;"><use href="#i-th"/></svg>
<svg class="ic" style="left:1762.9px;top:115.9px;width:8.6px;height:4.4px;color:#333;"><use href="#i-caret"/></svg>
<svg class="ic" style="left:1798.0px;top:109.1px;width:13.3px;height:13.6px;color:#333;"><use href="#i-export"/></svg>
<svg class="ic" style="left:1816.7px;top:115.9px;width:8.6px;height:4.4px;color:#333;"><use href="#i-caret"/></svg>
<div class="abs" style="left:1844px;top:99px;width:43px;height:36px;border:1px solid #ddd;background:#f4f4f4;border-radius:3.3px"></div>
<svg class="ic" style="left:1858.5px;top:108.9px;width:14.4px;height:14px;color:#333;"><use href="#i-search"/></svg>
<table><colgroup><col style="width:48px"><col style="width:58px"><col style="width:77px"><col style="width:85px"><col style="width:78px"><col style="width:95px"><col style="width:81px"><col style="width:127px"><col style="width:60px"><col style="width:95px"><col style="width:110px"><col style="width:198px"><col style="width:198px"><col style="width:199px"><col style="width:91px"></colgroup>
<thead><tr><th><span class="cb" style="top:-3px"></span></th><th>Id</th><th>用户ID</th><th>用户名</th><th>产品ID</th><th>产品名称</th><th>收益</th><th>返息类型</th><th>天数</th><th>投资金额</th><th>返息类型</th><th>购买时间</th><th>收益时间</th><th>结束时间</th><th>Operate</th></tr></thead><tbody>
<tr style="height:51px"><td><span class="cb"></span></td><td>11</td><td>1</td><td>admin</td><td>1</td><td>USDT</td><td>10.00</td><td><span class="red"><i class="dot"></i>每日返息</span></td><td>3</td><td>100</td><td><span class="red"><i class="dot"></i>正常</span></td><td>2025-11-15 10:30:14</td><td>2025-11-16 10:30:14</td><td>2025-11-18 10:30:14</td><td><span class="del"><svg class="ic" style="left:6.34px;top:5.66px;width:10.53px;height:11.49px;"><use href="#fa-trash"/></svg></span></td></tr>
<tr class="s1" style="height:52px"><td><span class="cb"></span></td><td>10</td><td>1</td><td>admin</td><td>1</td><td>USDT</td><td>10.00</td><td><span class="red"><i class="dot"></i>每日返息</span></td><td>3</td><td>100</td><td><span class="blue"><i class="dot"></i>已结束</span></td><td>2025-09-06 12:05:00</td><td>2025-09-09 12:05:00</td><td>2025-09-09 12:05:00</td><td><span class="del"><svg class="ic" style="left:6.34px;top:5.66px;width:10.53px;height:11.49px;"><use href="#fa-trash"/></svg></span></td></tr>
<tr style="height:51px"><td><span class="cb"></span></td><td>9</td><td>1</td><td>admin</td><td>2</td><td>BTC</td><td>10.00</td><td><span class="blue"><i class="dot"></i>到期全反</span></td><td>3</td><td>100</td><td><span class="blue"><i class="dot"></i>已结束</span></td><td>2025-09-06 12:04:56</td><td>2025-09-09 12:04:56</td><td>2025-09-09 12:04:56</td><td><span class="del"><svg class="ic" style="left:6.34px;top:5.66px;width:10.53px;height:11.49px;"><use href="#fa-trash"/></svg></span></td></tr>
<tr class="s1" style="height:52px"><td><span class="cb"></span></td><td>8</td><td>1</td><td>admin</td><td>6</td><td>XAUT</td><td>6.10</td><td><span class="blue"><i class="dot"></i>到期全反</span></td><td>90</td><td>10000</td><td><span class="red"><i class="dot"></i>正常</span></td><td>2025-09-06 12:04:47</td><td>2025-12-05 12:04:47</td><td>2025-12-05 12:04:47</td><td><span class="del"><svg class="ic" style="left:6.34px;top:5.66px;width:10.53px;height:11.49px;"><use href="#fa-trash"/></svg></span></td></tr>
<tr class="s1" style="height:51px"><td><span class="cb"></span></td><td>7</td><td>1</td><td>admin</td><td>6</td><td>XAUT</td><td>6.10</td><td><span class="blue"><i class="dot"></i>到期全反</span></td><td>90</td><td>10000</td><td><span class="red"><i class="dot"></i>正常</span></td><td>2025-08-31 06:18:54</td><td>2025-11-29 06:18:54</td><td>2025-11-29 06:18:54</td><td><span class="del"><svg class="ic" style="left:6.34px;top:5.66px;width:10.53px;height:11.49px;"><use href="#fa-trash"/></svg></span></td></tr>
<tr class="s1" style="height:52px"><td><span class="cb"></span></td><td>6</td><td>1</td><td>admin</td><td>3</td><td>ETH</td><td>10.00</td><td><span class="red"><i class="dot"></i>每日返息</span></td><td>3</td><td>100</td><td><span class="blue"><i class="dot"></i>已结束</span></td><td>2025-08-31 05:14:18</td><td>2025-09-03 05:14:18</td><td>2025-09-03 05:14:18</td><td><span class="del"><svg class="ic" style="left:6.34px;top:5.66px;width:10.53px;height:11.49px;"><use href="#fa-trash"/></svg></span></td></tr>
<tr class="s1" style="height:52px"><td><span class="cb"></span></td><td>5</td><td>1</td><td>admin</td><td>6</td><td>XAUT</td><td>6.10</td><td><span class="blue"><i class="dot"></i>到期全反</span></td><td>90</td><td>10000</td><td><span class="red"><i class="dot"></i>正常</span></td><td>2025-08-31 02:15:49</td><td>2025-11-29 02:15:49</td><td>2025-11-29 02:15:49</td><td><span class="del"><svg class="ic" style="left:6.34px;top:5.66px;width:10.53px;height:11.49px;"><use href="#fa-trash"/></svg></span></td></tr>
<tr class="s1" style="height:52px"><td><span class="cb"></span></td><td>4</td><td>1</td><td>admin</td><td>1</td><td>USDT</td><td>10.00</td><td><span class="red"><i class="dot"></i>每日返息</span></td><td>3</td><td>100</td><td><span class="blue"><i class="dot"></i>已结束</span></td><td>2025-08-28 13:15:43</td><td>2025-08-31 13:15:43</td><td>2025-08-31 13:15:43</td><td><span class="del"><svg class="ic" style="left:6.34px;top:5.66px;width:10.53px;height:11.49px;"><use href="#fa-trash"/></svg></span></td></tr>
<tr class="s1" style="height:52px"><td><span class="cb"></span></td><td>3</td><td>1</td><td>admin</td><td>2</td><td>BTC</td><td>10.00</td><td><span class="blue"><i class="dot"></i>到期全反</span></td><td>3</td><td>100</td><td><span class="blue"><i class="dot"></i>已结束</span></td><td>2025-08-29 13:15:28</td><td>2025-09-01 13:15:28</td><td>2025-09-01 13:15:28</td><td><span class="del"><svg class="ic" style="left:6.34px;top:5.66px;width:10.53px;height:11.49px;"><use href="#fa-trash"/></svg></span></td></tr>
<tr style="height:52px"><td><span class="cb"></span></td><td>1</td><td>1</td><td>admin</td><td>3</td><td>ETH</td><td>10.00</td><td><span class="red"><i class="dot"></i>每日返息</span></td><td>3</td><td>100</td><td><span class="blue"><i class="dot"></i>已结束</span></td><td>2025-08-25 12:25:41</td><td>2025-08-28 12:25:41</td><td>2025-08-28 12:25:41</td><td><span class="del"><svg class="ic" style="left:6.34px;top:5.66px;width:10.53px;height:11.49px;"><use href="#fa-trash"/></svg></span></td></tr>
</tbody></table>
<div class="abs" style="left:286px;top:733px;line-height:22px;font-size:15.4px;color:#333">Showing 1 to 10 of 10 rows</div>
</body></html>
